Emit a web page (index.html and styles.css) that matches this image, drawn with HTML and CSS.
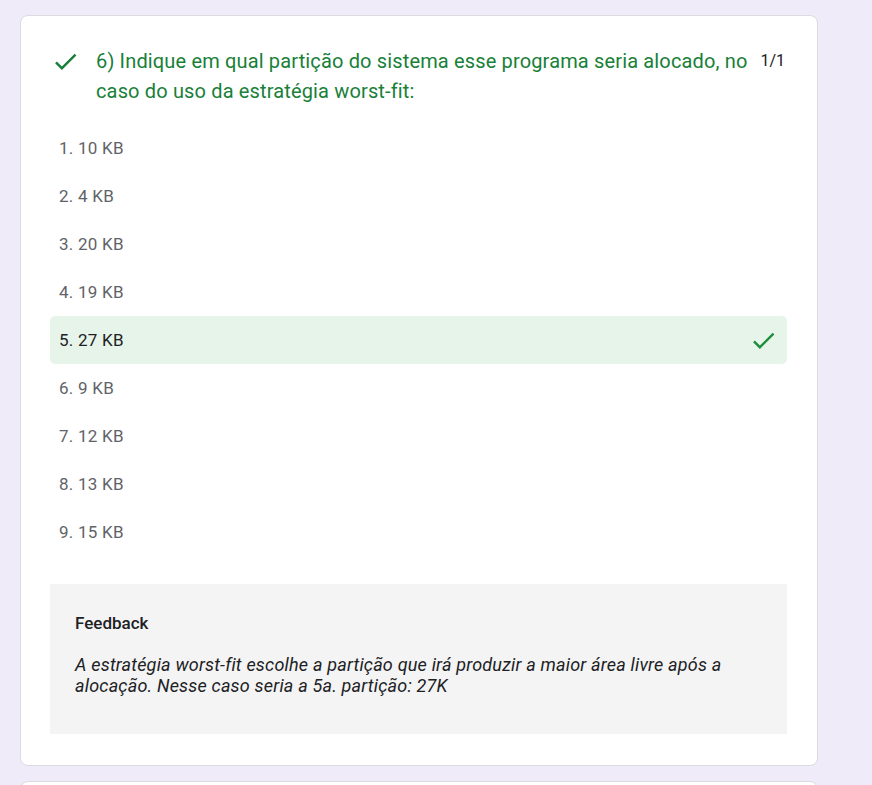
FILE: index.html
```html
<!DOCTYPE html>
<html lang="pt">
<head>
<meta charset="utf-8">
<title>Quiz</title>
<link rel="stylesheet" href="styles.css">
</head>
<body>
<div class="page">
  <div class="card">
    <div class="q-head">
      <svg class="q-check" viewBox="0 0 24 24" aria-hidden="true"><path d="M9 16.17L4.83 12l-1.42 1.41L9 19 21 7l-1.41-1.41z"/></svg>
      <div class="q-title">6) Indique em qual partição do sistema esse programa seria alocado, no caso do uso da estratégia worst-fit:</div>
      <div class="q-points">1/1</div>
    </div>
    <ul class="options">
      <li class="opt">1. 10 KB</li>
      <li class="opt">2. 4 KB</li>
      <li class="opt">3. 20 KB</li>
      <li class="opt">4. 19 KB</li>
      <li class="opt correct"><span>5. 27 KB</span><svg class="opt-check" viewBox="0 0 24 24" aria-hidden="true"><path d="M9 16.17L4.83 12l-1.42 1.41L9 19 21 7l-1.41-1.41z"/></svg></li>
      <li class="opt">6. 9 KB</li>
      <li class="opt">7. 12 KB</li>
      <li class="opt">8. 13 KB</li>
      <li class="opt">9. 15 KB</li>
    </ul>
    <div class="feedback">
      <div class="fb-title">Feedback</div>
      <div class="fb-text">A estratégia worst-fit escolhe a partição que irá produzir a maior área livre após a alocação. Nesse caso seria a 5a. partição: 27K</div>
    </div>
  </div>
  <div class="card next"></div>
</div>
</body>
</html>
```
FILE: styles.css
```css
html, body {
  margin: 0;
  padding: 0;
}
body {
  background: #f0ebf8;
  font-family: Roboto, "Liberation Sans", Arial, sans-serif;
  color: #202124;
  height: 785px;
  overflow: hidden;
}
.page {
  padding: 15px 0 0 20px;
  width: 798px;
  height: 770px;
  display: flex;
  flex-direction: column;
  gap: 15px;
  overflow: hidden;
}
.card {
  background: #fff;
  border: 1px solid #dadce0;
  border-radius: 8px;
  padding: 30px 30px 31px 29px;
  flex: none;
}
.card.next {
  height: 40px;
  padding: 0;
}
.q-head {
  display: flex;
  align-items: flex-start;
}
.q-check {
  width: 29px;
  height: 29px;
  flex: none;
  fill: #188038;
  margin: 1px 16px 0 1px;
}
.q-title {
  flex: 1;
  font-size: 20px;
  line-height: 30px;
  color: #188038;
  letter-spacing: 0.15px;
}
.q-points {
  flex: none;
  font-size: 16px;
  line-height: 30px;
  margin-left: 10px;
  margin-right: 2px;
  color: #202124;
}
.options {
  list-style: none;
  margin: 18px 0 0;
  padding: 0;
}
.opt {
  height: 48px;
  display: flex;
  align-items: center;
  justify-content: space-between;
  padding: 0 9px 0 9px;
  font-size: 17px;
  letter-spacing: 0.25px;
  color: #5f6368;
  border-radius: 5px;
}
.opt.correct {
  background: #e6f4ea;
  color: #202124;
}
.opt-check {
  width: 29px;
  height: 29px;
  fill: #1e8e3e;
}
.feedback {
  margin-top: 28px;
  background: #f4f4f4;
  padding: 28px 25px 38px;
}
.fb-title {
  font-size: 17px;
  font-weight: 500;
  line-height: 22px;
  color: #202124;
}
.fb-text {
  margin-top: 20px;
  font-size: 18px;
  font-style: italic;
  line-height: 21px;
  letter-spacing: 0.2px;
  color: #202124;
}
```
